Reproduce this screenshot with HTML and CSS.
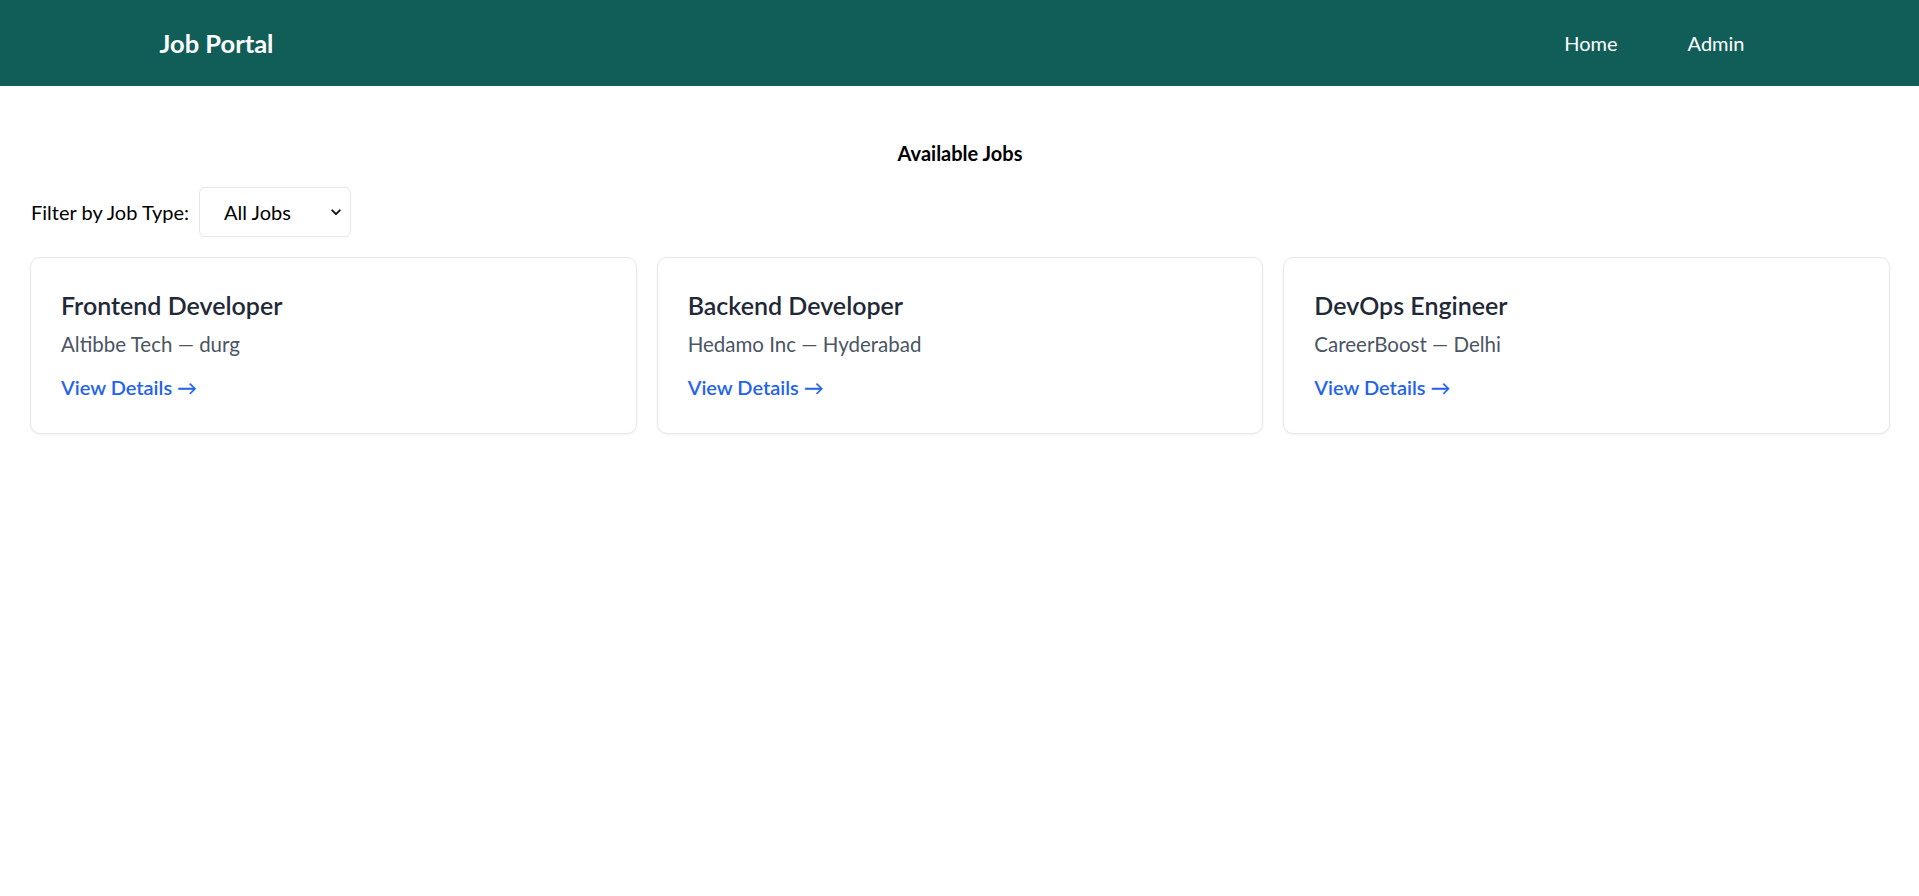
FILE: index.html
```html
<!DOCTYPE html>
<html lang="en">
<head>
<meta charset="utf-8">
<title>Job Portal</title>
<link rel="stylesheet" href="styles.css">
</head>
<body>
<header class="topbar">
  <div class="topbar-inner">
    <a class="brand" href="#">Job Portal</a>
    <nav class="nav">
      <a class="nav-link" href="#">Home</a>
      <a class="nav-link" href="#">Admin</a>
    </nav>
  </div>
</header>
<main class="main">
  <h2 class="page-title">Available Jobs</h2>
  <div class="filter">
    <label class="filter-label" for="type">Filter by Job Type:</label>
    <div class="select-wrap">
      <select id="type" class="select">
        <option>All Jobs</option>
        <option>Full-time</option>
        <option>Part-time</option>
        <option>Internship</option>
      </select>
      <svg class="chevron" width="10" height="7" viewBox="0 0 10 7" aria-hidden="true"><path d="M1.2 1.3 L5 5.1 L8.8 1.3" fill="none" stroke="#111" stroke-width="1.9" stroke-linecap="round" stroke-linejoin="round"/></svg>
    </div>
  </div>
  <div class="grid">
    <article class="card">
      <h3 class="card-title">Frontend Developer</h3>
      <p class="card-meta">Altibbe Tech — durg</p>
      <a class="card-link" href="#">View Details →</a>
    </article>
    <article class="card">
      <h3 class="card-title">Backend Developer</h3>
      <p class="card-meta">Hedamo Inc — Hyderabad</p>
      <a class="card-link" href="#">View Details →</a>
    </article>
    <article class="card">
      <h3 class="card-title">DevOps Engineer</h3>
      <p class="card-meta">CareerBoost — Delhi</p>
      <a class="card-link" href="#">View Details →</a>
    </article>
  </div>
</main>
</body>
</html>
```

FILE: styles.css
```css
* { box-sizing: border-box; }

html, body {
  margin: 0;
  padding: 0;
  background: #ffffff;
}

body {
  font-family: "Segoe UI", Lato, "Open Sans", sans-serif;
  font-size: 20px;
  line-height: 30px;
  color: #000000;
}

a { text-decoration: none; }

.topbar {
  background: #115e59;
  height: 86px;
}

.topbar-inner {
  max-width: 1600px;
  height: 100%;
  margin: 0 auto;
  display: flex;
  align-items: center;
  justify-content: space-between;
}

.brand {
  color: #ffffff;
  font-size: 25.5px;
  line-height: 35px;
  font-weight: 700;
}

.nav {
  display: flex;
  gap: 40px;
}

.nav-link {
  color: #ffffff;
  font-size: 20px;
  line-height: 30px;
  padding: 0 15px;
}

.main {
  padding: 30px 29px 30px 30px;
}

.page-title {
  margin: 22px 0 19px;
  text-align: center;
  font-size: 20px;
  line-height: 30px;
  font-weight: 700;
}

.filter {
  display: flex;
  align-items: center;
  gap: 10px;
  margin-bottom: 20px;
  padding-left: 1px;
}

.filter-label {
  font-size: 20px;
  line-height: 30px;
}

.select-wrap {
  position: relative;
  width: 152px;
  height: 50px;
}

.select {
  appearance: none;
  -webkit-appearance: none;
  width: 100%;
  height: 100%;
  border: 1px solid #e5e7eb;
  border-radius: 6px;
  background: #ffffff;
  font-family: inherit;
  font-size: 20px;
  color: #000000;
  padding: 0 30px 0 24px;
  outline: none;
}

.chevron {
  position: absolute;
  right: 10px;
  top: 22px;
  pointer-events: none;
}

.grid {
  display: grid;
  grid-template-columns: repeat(3, 1fr);
  gap: 20px;
}

.card {
  border: 1px solid #e5e7eb;
  border-radius: 10px;
  background: #ffffff;
  box-shadow: 0 1px 2px rgba(0, 0, 0, 0.05);
  padding: 30px;
  height: 177px;
  display: flex;
  flex-direction: column;
  align-items: flex-start;
}

.card-title {
  margin: 0;
  font-size: 25px;
  line-height: 35px;
  font-weight: 600;
  color: #1f2937;
}

.card-meta {
  margin: 6px 0 0;
  font-size: 20.5px;
  line-height: 30px;
  color: #4b5563;
}

.card-link {
  margin-top: 13px;
  font-size: 20px;
  line-height: 30px;
  font-weight: 600;
  color: #2563eb;
}
```
